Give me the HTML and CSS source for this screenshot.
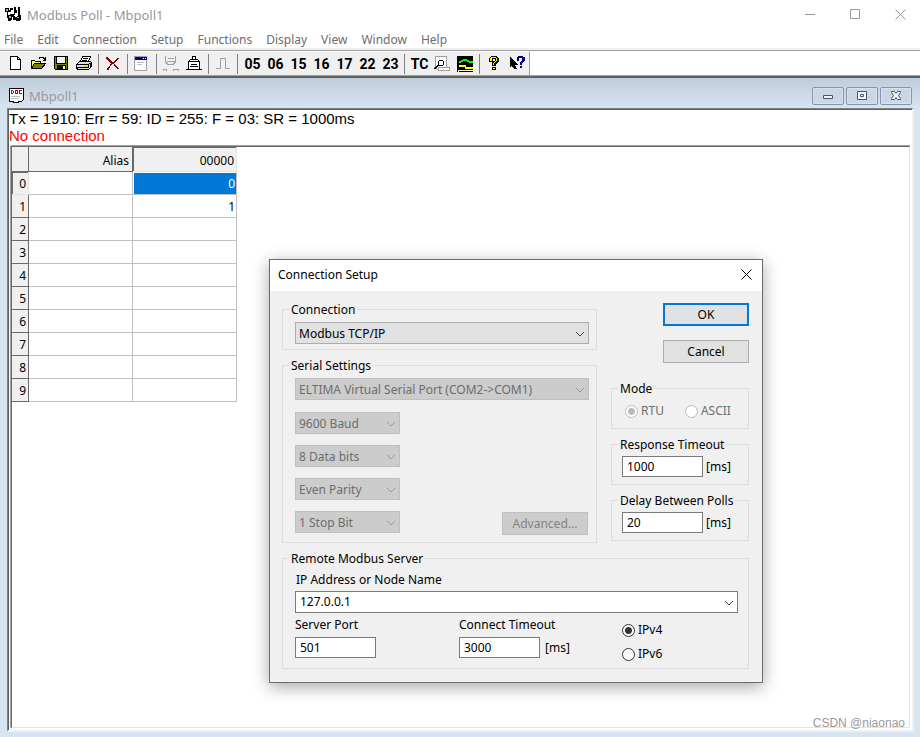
FILE: index.html
```html
<!DOCTYPE html>
<html lang="en">
<head>
  <meta charset="UTF-8" />
  <meta name="viewport" content="width=device-width, initial-scale=1.0"/>
  <title>Modbus Poll - Mbpoll1</title>
  <link rel="stylesheet" href="styles.css">
</head>
<body>
  <!-- Shared arrow for the drop-downs -->
  <svg class="defs" aria-hidden="true">
    <symbol id="chevron" viewBox="0 0 10 6"><path d="M1 1l4 4 4-4" fill="none" stroke="currentColor"/></symbol>
  </svg>

  <header class="titlebar">
    <svg class="app-icon" viewBox="0 0 16 16" shape-rendering="crispEdges">
      <path d="M0 1h4v4H0zM5 1h3v2H5zM4 3h2v2H4zM2 5h1v3h2V7h2v6H6v1H3v-3H2zM9 0h2v3h1v3h-2v2H9zM13 0h2v8h1v5h-1v1h-4v-1h-1v-3h2v-1h1zM7 7h2v2h1v4H8v-3H7z" fill="#000"/>
      <path d="M1 2h2v2H1zM12 10h2v1h-2zM4 9h2v2H4z" fill="#aaa"/>
    </svg>
    <h1>Modbus Poll - Mbpoll1</h1>
    <div class="window-buttons">
      <button aria-label="Minimize"><svg viewBox="0 0 11 11"><path d="M0 5.500h10"/></svg></button>
      <button aria-label="Maximize"><svg viewBox="0 0 11 11"><path d="M.5.5h9v9h-9z"/></svg></button>
      <button aria-label="Close"><svg viewBox="0 0 11 11"><path d="M.5.5l10 10M10.500.5l-10 10"/></svg></button>
    </div>
  </header>

  <nav class="menubar">
    <button>File</button>
    <button>Edit</button>
    <button>Connection</button>
    <button>Setup</button>
    <button>Functions</button>
    <button>Display</button>
    <button>View</button>
    <button>Window</button>
    <button>Help</button>
  </nav>

  <div class="toolbar-row">
    <div class="toolbar">
      <button aria-label="New"><svg viewBox="0 0 16 16"><path d="M3.500.5h7l3 3v10h-10z" fill="#fff" stroke="#000"/><path d="M10.500.5v3h3" fill="none" stroke="#000"/></svg></button>
      <button aria-label="Open"><svg viewBox="0 0 16 16"><path d="M1.500 12.500v-8h3l1 1h5v2" fill="#ff6" stroke="#000"/><path d="M1.500 12.500l3-5h11l-4 5z" fill="#808000" stroke="#000"/><path d="M9 2.500l1-1h3l2 2M15.500 1v3h-3" fill="none" stroke="#000"/></svg></button>
      <button aria-label="Save"><svg viewBox="0 0 16 16"><path d="M1.500.5h13v13h-12l-1-1z" fill="#808000" stroke="#000"/><path d="M4 1h8v6H4z" fill="#f0f0f0"/><path d="M3.500 1v6.500h9V1" fill="none" stroke="#000"/><path d="M4 9h9v5H4z"/><path d="M10 10h2v3h-2z" fill="#fff"/></svg></button>
      <button aria-label="Print"><svg viewBox="0 0 16 16"><path d="M4.500 5.500l2-5h8l-2 5z" fill="#fff" stroke="#000"/><path d="M7 2.500h5M6 4.500h5" stroke="#000"/><path d="M.5 8.500l3-3h11l1 1v4l-3 3H2.500l-2-1z" fill="#ddd" stroke="#000"/><path d="M1 8.500h11v3H1M12.500 8.500l3-2M4 13.500h8M14.500 8v3" fill="none" stroke="#000"/><path d="M8 10h3v1H8z" fill="#cc0"/></svg></button>
      <span class="sep"></span>
      <button aria-label="Delete"><svg viewBox="0 0 16 16"><path d="M1 1h2v1h1v1h1v1h1v1h1v1h2V5h1V4h1V3h1V2h2v1h-1v1h-1v1h-1v1h-1v1h-1v1h1v1h1v1h1v1h1v1h1v1h-2v-1h-1v-1h-1v-1h-1V9H9V8H7v1H6v1H5v2H4v2H2v-2h1v-1h1v-1h1V8h1V7H5V6H4V5H3V4H2V3H1z" fill="#800000"/></svg></button>
      <span class="sep"></span>
      <button aria-label="Read/Write Definition"><svg viewBox="0 0 16 16"><path d="M.5.5h12v14H.5z" fill="#fff" stroke="#a0a0a0"/><path d="M1 1h12v3H1z" fill="#000080"/><path d="M9 2h1v1H9zM11 2h1v1h-1z" fill="#fff"/><path d="M3 6.500h7M3 8.500h5" stroke="#c0c0c0"/></svg></button>
      <span class="sep"></span>
      <button aria-label="Connect" disabled><svg viewBox="0 0 16 16"><path d="M2.500 0v6.500h1l1 2h6l1-2h1V0M5 2.500h6M4 5.500h8M0 14.500l1-1h2l1 1M10 14.500l1-1h4l1 1" fill="none" stroke="#a0a0a0"/></svg></button>
      <button aria-label="Disconnect"><svg viewBox="0 0 16 16"><path d="M6.500 3V.5h3V3M2.500 5.500l2-2h7l2 2v8h-11z" fill="#fff" stroke="#000"/><path d="M2 5.500h12M4 10.500h8M5 8.500h6M0 13.500h16" stroke="#000"/></svg></button>
      <span class="sep"></span>
      <button aria-label="Poll once" disabled><svg viewBox="0 0 16 16"><path d="M1 12.500h4v-10h5v10h5" fill="none" stroke="#a0a0a0"/></svg></button>
      <span class="sep"></span>
      <button>05</button>
      <button>06</button>
      <button>15</button>
      <button>16</button>
      <button>17</button>
      <button>22</button>
      <button>23</button>
      <span class="sep"></span>
      <button>TC</button>
      <button aria-label="Traffic"><svg viewBox="0 0 16 16"><path d="M1.500.5h11v11h3v3h-11l-3-3z" fill="#fff" stroke="#a0a0a0"/><path d="M0 11.500h3M4 14.500l1-3h10" fill="none" stroke="#a0a0a0"/><path d="M5.500 4.500h3l1 1v3l-1 1h-3l-1-1v-3zM4.500 9l-4 4" fill="none" stroke="#000"/></svg></button>
      <button aria-label="Chart"><svg viewBox="0 0 16 16"><path d="M0 0h1v16H0zM1 0h15v14H1zM2 15h14v1H2z" fill="#000"/><path d="M2 6V5h2V4h2V3h4v1h2v1h4v2h-4V6h-2V5H6v1H4v1H2z" fill="#0f0"/><path d="M2 9h7v2h7v2H8v-2H2z" fill="#ff0"/></svg></button>
      <span class="sep"></span>
      <button aria-label="About"><svg viewBox="0 0 16 16"><path d="M5 0h6v1h1v1h1v4h-1v1h-1v1h-1v2H6V6h1V5h2V3H7v3H3V2h1V1h1zM6 11h4v3H6z" fill="#000"/><path d="M5 1h5v1h1v3h-1v1H9v1H8v2H7V7h1V6h1V5h1V2H6v3H4V2h1zM7 12h2v1H7z" fill="#ff0"/></svg></button>
      <button aria-label="Context help"><svg viewBox="0 0 16 16"><path d="M1 1l7 7H5l2 4H5L3 9l-2 2z" fill="#000" stroke="#000"/><path d="M9 0h5v1h2v4h-1v1h-1v1h-1v2h-2V6h1V5h1V2h-3v3H8V1h1zM11 10h2v2h-2z" fill="#000080"/></svg></button>
    </div>
  </div>

  <main class="mdi-child">
    <div class="child-title">
      <svg class="doc-icon" viewBox="0 0 16 16" shape-rendering="crispEdges">
        <path d="M.5.5h14v11l-2 2h-2l-2 1h-3l-2-1h-3z" fill="#fff" stroke="#000"/>
        <path d="M2 2h2v1h1v2H4v1H2zM3 3v2h1V3zM6 2h3v4H6zM7 3v2h1V3zM10 2h3v1h-2v2h2v1h-3z" fill="#d00" fill-rule="evenodd"/>
        <path d="M2 8.500h9M2 10.500h7" stroke="#c0c0c0"/>
      </svg>
      <h2>Mbpoll1</h2>
      <div class="child-buttons">
        <button aria-label="Minimize child"><svg viewBox="0 0 12 10"><path d="M1.500 4.500h9v3h-9z"/></svg></button>
        <button aria-label="Restore child"><svg viewBox="0 0 12 10"><path d="M1.500.5h9v8h-9zM4.500 3.500h3v2h-3z"/></svg></button>
        <button aria-label="Close child"><svg viewBox="0 0 12 10"><path d="M1.500.5h3L6 2.500 7.500.5h3v1l-2 3 2 3v1h-3L6 6.500l-1.500 2h-3v-1l2-3-2-3z"/></svg></button>
      </div>
    </div>
    <section class="child-body">
      <p class="status">Tx = 1910: Err = 59: ID = 255: F = 03: SR = 1000ms</p>
      <p class="status error">No connection</p>
      <div class="grid-view">
        <table>
          <thead>
            <tr><th class="corner"></th><th>Alias</th><th class="current">00000</th></tr>
          </thead>
          <tbody>
            <tr><th class="current">0</th><td></td><td class="selected">0</td></tr>
            <tr><th>1</th><td></td><td>1</td></tr>
            <tr><th>2</th><td></td><td></td></tr>
            <tr><th>3</th><td></td><td></td></tr>
            <tr><th>4</th><td></td><td></td></tr>
            <tr><th>5</th><td></td><td></td></tr>
            <tr><th>6</th><td></td><td></td></tr>
            <tr><th>7</th><td></td><td></td></tr>
            <tr><th>8</th><td></td><td></td></tr>
            <tr><th>9</th><td></td><td></td></tr>
          </tbody>
        </table>
      </div>
    </section>
  </main>

  <!-- Connection Setup dialog -->
  <div class="dialog" role="dialog" aria-labelledby="dialogTitle">
    <div class="dialog-title">
      <h2 id="dialogTitle">Connection Setup</h2>
      <button aria-label="Close dialog"><svg viewBox="0 0 11 11"><path d="M.5.5l10 10M10.500.5l-10 10"/></svg></button>
    </div>
    <form class="dialog-body">
      <div class="column">
        <fieldset>
          <legend>Connection</legend>
          <span class="combo">
            <select aria-label="Connection"><option>Modbus TCP/IP</option></select>
            <svg><use href="#chevron"/></svg>
          </span>
        </fieldset>
        <fieldset class="serial">
          <legend>Serial Settings</legend>
          <span class="combo">
            <select aria-label="Port" disabled><option>ELTIMA Virtual Serial Port (COM2-&gt;COM1)</option></select>
            <svg><use href="#chevron"/></svg>
          </span>
          <div class="serial-row">
            <div class="serial-options">
              <span class="combo">
                <select aria-label="Baud rate" disabled><option>9600 Baud</option></select>
                <svg><use href="#chevron"/></svg>
              </span>
              <span class="combo">
                <select aria-label="Data bits" disabled><option>8 Data bits</option></select>
                <svg><use href="#chevron"/></svg>
              </span>
              <span class="combo">
                <select aria-label="Parity" disabled><option>Even Parity</option></select>
                <svg><use href="#chevron"/></svg>
              </span>
              <span class="combo">
                <select aria-label="Stop bits" disabled><option>1 Stop Bit</option></select>
                <svg><use href="#chevron"/></svg>
              </span>
            </div>
            <button type="button" class="btn" disabled>Advanced...</button>
          </div>
        </fieldset>
      </div>

      <div class="column">
        <div class="actions">
          <button type="button" class="btn primary">OK</button>
          <button type="button" class="btn">Cancel</button>
        </div>
        <fieldset class="mode">
          <legend>Mode</legend>
          <label><input type="radio" name="mode" checked disabled>RTU</label>
          <label><input type="radio" name="mode" disabled>ASCII</label>
        </fieldset>
        <fieldset class="timing">
          <legend>Response Timeout</legend>
          <input type="text" id="response" value="1000" aria-label="Response Timeout">
          <label for="response">[ms]</label>
        </fieldset>
        <fieldset class="timing">
          <legend>Delay Between Polls</legend>
          <input type="text" id="delay" value="20" aria-label="Delay Between Polls">
          <label for="delay">[ms]</label>
        </fieldset>
      </div>

      <fieldset class="server">
        <legend>Remote Modbus Server</legend>
        <label for="address">IP Address or Node Name</label>
        <span class="combo editable">
          <select id="address"><option>127.0.0.1</option></select>
          <svg><use href="#chevron"/></svg>
        </span>
        <div class="server-row">
          <div class="field">
            <label for="port">Server Port</label>
            <input type="text" id="port" value="501">
          </div>
          <div class="field">
            <label for="timeout">Connect Timeout</label>
            <div class="with-unit"><input type="text" id="timeout" value="3000"><span>[ms]</span></div>
          </div>
          <div class="ip-version">
            <label><input type="radio" name="ip" checked>IPv4</label>
            <label><input type="radio" name="ip">IPv6</label>
          </div>
        </div>
      </fieldset>
    </form>
  </div>

  <div class="watermark">CSDN @niaonao</div>
</body>
</html>
```
FILE: styles.css
```css
* {
  margin: 0;
  padding: 0;
  box-sizing: border-box;
}

body {
  position: relative;
  display: flex;
  flex-direction: column;
  min-height: 100vh;
  background: #fff;
  color: #000;
  font-family: "Noto Sans", "Open Sans", sans-serif;
  font-size: 12px;
  line-height: 16px;
}

button,
input,
select {
  font: inherit;
  color: inherit;
}

button {
  border: none;
  background: none;
}

.defs {
  position: absolute;
  width: 0;
  height: 0;
}

/* Title bar and menu */
.titlebar {
  display: flex;
  align-items: center;
  gap: 6px;
  height: 29px;
  padding-left: 5px;
  overflow: hidden;
  color: #999;
}

.titlebar h1 {
  flex: 1;
  font-size: 13px;
  font-weight: normal;
}

.app-icon,
.doc-icon {
  width: 16px;
  height: 16px;
}

.window-buttons {
  display: flex;
  margin-right: -3px;
}

.window-buttons button {
  width: 45px;
  height: 29px;
}

.window-buttons svg,
.dialog-title svg {
  display: block;
  width: 11px;
  height: 11px;
  margin: auto;
  fill: none;
  stroke: currentColor;
}

.menubar {
  display: flex;
  gap: 14px;
  height: 21px;
  padding: 2px 4px 0;
  border-bottom: 2px solid #f0f0f0;
  color: #6d6d6d;
}

.menubar button {
  height: 17px;
}

/* Toolbar */
.toolbar-row {
  display: flex;
  border-top: 1px solid #a0a0a0;
  border-bottom: 1px solid #a0a0a0;
  background: #fff;
}

.toolbar {
  display: flex;
  align-items: center;
  height: 24px;
  padding-left: 4px;
  background: #f0f0f0;
  border-top: 1px solid #fff;
  border-right: 1px solid #a0a0a0;
}

.toolbar button {
  width: 23px;
  height: 22px;
  font-family: Roboto, sans-serif;
  font-size: 14px;
  font-weight: bold;
}

.toolbar svg {
  display: block;
  width: 16px;
  height: 16px;
  margin-left: 3px;
  shape-rendering: crispEdges;
}

.sep {
  width: 6px;
  height: 20px;
  background: linear-gradient(#808080, #808080) 2px 0 / 1px 100% no-repeat;
}

/* Child window */
.mdi-child {
  flex: 1;
  display: flex;
  flex-direction: column;
  padding: 0 6px 5px 7px;
  border-top: 2px solid #606060;
  background: linear-gradient(#bfcddb, #d7e4f2 30px);
}

.child-title {
  display: flex;
  align-items: center;
  gap: 4px;
  height: 30px;
  padding: 6px 2px 0 2px;
}

.child-title h2 {
  flex: 1;
  font-size: 13px;
  font-weight: normal;
  color: #999;
}

.child-buttons {
  display: flex;
  gap: 2px;
}

.child-buttons button {
  width: 32px;
  height: 18px;
  border: 1px solid #8394ad;
  border-radius: 2px;
  background: #c8d6e5;
  box-shadow: inset 0 0 0 1px #d6e2ef;
}

.child-buttons svg {
  display: block;
  width: 12px;
  height: 10px;
  margin: auto;
  fill: #f4f4f4;
  stroke: #4d5464;
}

.child-body {
  flex: 1;
  display: flex;
  flex-direction: column;
  border: 1px solid #808080;
  border-right: 2px solid #f0f0f0;
  border-bottom: 2px solid #f0f0f0;
  box-shadow: inset 1px 1px #606060;
  background: #fff;
  padding: 1px 2px 2px 1px;
}

.status {
  font-family: "Liberation Sans", Arial, sans-serif;
  font-size: 15px;
  line-height: 17px;
}

.error {
  color: #f00;
}

.grid-view {
  flex: 1;
  margin: 2px 0 0 2px;
  border: 1px solid #696969;
  border-right-color: #e3e3e3;
  border-bottom-color: #e3e3e3;
  box-shadow: 0 -1px #a0a0a0, -1px 0 #a0a0a0;
}

table {
  border-spacing: 0;
  table-layout: fixed;
  width: 225px;
}

th,
td {
  height: 23px;
  padding: 2px 1px 0 0;
  border-right: 1px solid #c0c0c0;
  border-bottom: 1px solid #c0c0c0;
  font-size: 12px;
  font-weight: normal;
  text-align: right;
}

th {
  padding-right: 2px;
  background: #f0f0f0;
  border-color: #696969;
}

thead th {
  height: 25px;
  padding: 3px 3px 0 0;
}

thead .corner {
  width: 17px;
}

thead .current {
  padding-right: 2px;
  border-color: #e3e3e3;
  box-shadow: inset 1px 1px #696969;
}

tbody th.current {
  box-shadow: inset 1px 1px #696969;
  border-color: #e3e3e3;
}

.selected {
  background: #0078d7;
  color: #fff;
  box-shadow: inset 1px 1px #fff;
}

/* Dialog */
.dialog {
  position: absolute;
  top: 259px;
  left: 269px;
  width: 494px;
  border: 1px solid #6b6b6b;
  background: #f0f0f0;
  box-shadow: 0 4px 16px rgba(0, 0, 0, 0.35);
}

.dialog-title {
  display: flex;
  align-items: center;
  justify-content: space-between;
  height: 31px;
  padding: 0 0 2px 8px;
  background: #fff;
}

.dialog-title h2 {
  font-size: 12px;
  font-weight: normal;
}

.dialog-title button {
  width: 31px;
  height: 28px;
}

.dialog-body {
  display: grid;
  grid-template-columns: 1fr 138px;
  gap: 7px 14px;
  padding: 10px 13px 13px 12px;
}

.column {
  display: flex;
  flex-direction: column;
  gap: 7px;
}

fieldset {
  min-width: 0;
  border: 1px solid #dcdcdc;
  padding: 5px 7px 5px 12px;
}

legend {
  margin-left: -6px;
  padding: 2px 2px 0;
  line-height: 14px;
}

.combo {
  position: relative;
  display: block;
  height: 22px;
}

.combo select {
  appearance: none;
  width: 100%;
  height: 22px;
  padding: 2px 20px 0 3px;
  border: 1px solid #adadad;
  border-radius: 0;
  background: #e1e1e1;
}

.combo select:disabled {
  background: #ccc;
  border-color: #bfbfbf;
  color: #6d6d6d;
  opacity: 1;
}

/* the arrow lies over the right end of the select */
.combo svg {
  position: absolute;
  top: 9px;
  right: 4px;
  width: 10px;
  height: 6px;
  color: #444;
  pointer-events: none;
}

.combo select:disabled + svg {
  color: #999;
}

.combo.editable select {
  background: #fff;
  border-color: #7a7a7a;
  padding: 0 20px 0 4px;
}

.serial {
  padding-bottom: 7px;
}

.serial-row {
  display: flex;
  justify-content: space-between;
  align-items: flex-end;
  margin-top: 12px;
}

.serial-options {
  display: grid;
  gap: 11px;
  width: 105px;
  padding-bottom: 2px;
}

.btn {
  width: 86px;
  height: 23px;
  border: 1px solid #adadad;
  background: #e1e1e1;
}

.btn:disabled {
  background: #ccc;
  border-color: #bfbfbf;
  color: #838383;
}

.serial-row .btn {
  margin-right: 1px;
}

.primary {
  border: 2px solid #0078d7;
}

.actions {
  display: flex;
  flex-direction: column;
  align-items: flex-end;
  gap: 14px;
  padding: 2px 0 10px;
}

input[type="text"] {
  width: 81px;
  height: 21px;
  padding: 0 4px;
  border: 1px solid #7a7a7a;
  background: #fff;
}

input[type="radio"] {
  appearance: none;
  flex: none;
  width: 13px;
  height: 13px;
  border: 1px solid #333;
  border-radius: 50%;
  background: #fff;
}

input[type="radio"]:checked {
  background: radial-gradient(circle, #333 3px, #fff 4px);
}

input[type="radio"]:disabled {
  border-color: #bbb;
}

input[type="radio"]:checked:disabled {
  background: radial-gradient(circle, #bbb 3px, #fff 4px);
}

.mode label,
.ip-version label {
  display: flex;
  align-items: center;
  gap: 3px;
}

.mode {
  display: flex;
  gap: 21px;
  padding: 7px 0 9px 13px;
  color: #6d6d6d;
}

.mode legend {
  margin-left: -7px;
  color: #000;
}

.timing {
  display: flex;
  align-items: center;
  gap: 3px;
  padding: 4px 0 7px 10px;
}

.timing legend {
  margin-left: -4px;
}

.server {
  grid-column: 1 / -1;
  padding: 6px 10px 6px 12px;
}

.server > label {
  display: block;
  margin: 0 0 3px 1px;
}

.server-row {
  display: grid;
  grid-template-columns: 164px 163px 1fr;
  padding-top: 4px;
}

.field {
  display: flex;
  flex-direction: column;
  gap: 4px;
}

.with-unit {
  display: flex;
  align-items: center;
  gap: 5px;
}

.ip-version {
  display: grid;
  align-content: start;
  gap: 8px;
  padding-top: 5px;
}

.watermark {
  position: absolute;
  right: 15px;
  bottom: 6px;
  font-family: "Liberation Sans", Arial, sans-serif;
  font-size: 12px;
  color: #999;
}
```
